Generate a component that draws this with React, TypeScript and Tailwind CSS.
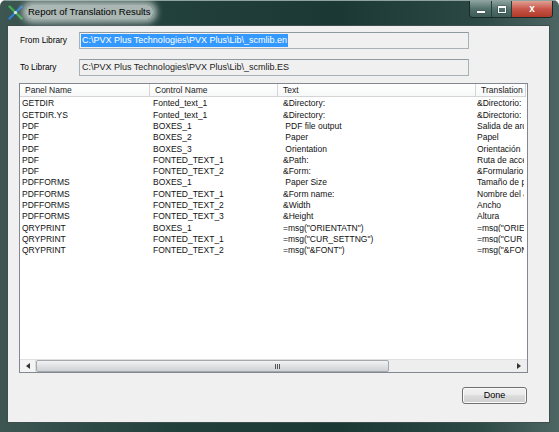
import React from "react";

const rows: [string, string, string, string][] = [
  ["GETDIR", "Fonted_text_1", "&Directory:", "&Directorio:"],
  ["GETDIR.YS", "Fonted_text_1", "&Directory:", "&Directorio:"],
  ["PDF", "BOXES_1", " PDF file output", "Salida de archivo PDF"],
  ["PDF", "BOXES_2", " Paper", "Papel"],
  ["PDF", "BOXES_3", " Orientation", "Orientación"],
  ["PDF", "FONTED_TEXT_1", "&Path:", "Ruta de acceso:"],
  ["PDF", "FONTED_TEXT_2", "&Form:", "&Formulario:"],
  ["PDFFORMS", "BOXES_1", " Paper Size", "Tamaño de papel"],
  ["PDFFORMS", "FONTED_TEXT_1", "&Form name:", "Nombre del &formulario:"],
  ["PDFFORMS", "FONTED_TEXT_2", "&Width", "Ancho"],
  ["PDFFORMS", "FONTED_TEXT_3", "&Height", "Altura"],
  ["QRYPRINT", "BOXES_1", "=msg(\"ORIENTATN\")", "=msg(\"ORIENTATN\")"],
  ["QRYPRINT", "FONTED_TEXT_1", "=msg(\"CUR_SETTNG\")", "=msg(\"CUR_SETTNG\")"],
  ["QRYPRINT", "FONTED_TEXT_2", "=msg(\"&FONT\")", "=msg(\"&FONT\")"],
];

const cols = [
  { name: "Panel Name", w: "w-[130px]" },
  { name: "Control Name", w: "w-[128px]" },
  { name: "Text", w: "w-[198px]" },
  { name: "Translation", w: "w-[50px]" },
];

function AppIcon() {
  return (
    <svg width="15" height="15" viewBox="0 0 15 15">
      <path d="M1.5 1.5 L6.5 6.5" stroke="#3fae4f" strokeWidth="2.4" strokeLinecap="round" />
      <path d="M13.5 1.5 L8.5 6.5" stroke="#2f7fd0" strokeWidth="2.4" strokeLinecap="round" />
      <path d="M1.5 13.5 L6.5 8.5" stroke="#2f7fd0" strokeWidth="2.4" strokeLinecap="round" />
      <path d="M13.5 13.5 L8.5 8.5" stroke="#3fae4f" strokeWidth="2.4" strokeLinecap="round" />
      <circle cx="7.5" cy="7.5" r="1.6" fill="#dfeee0" />
    </svg>
  );
}

function TextBox({ value, selected }: { value: string; selected?: boolean }) {
  return (
    <div className="w-[390px] h-[17px] border border-[#a7b2b8] border-t-[#8e9ba3] bg-[#f0f0f0] flex items-center pl-[1px]">
      <span
        className={
          selected
            ? "bg-[#3399ff] text-white px-[1px] leading-[13px]"
            : "text-[#222] px-[1px] leading-[13px]"
        }
      >
        {value}
      </span>
    </div>
  );
}

export default function App() {
  return (
    <div
      className="w-[559px] h-[432px] flex flex-col bg-[linear-gradient(90deg,#3d5652_0%,#22403c_30%,#1c3834_60%,#2b4844_85%,#4e6663_100%)] rounded-t-[6px] overflow-hidden"
      style={{ fontFamily: '"Liberation Sans", Arial, sans-serif' }}
    >
      {/* Title bar */}
      <div className="h-[25px] flex items-start border-t border-[#8ea39e] relative">
        <div className="flex items-center h-[22px] pl-[8px] gap-[3px]">
          <AppIcon />
          <span className="text-[9.5px] text-black px-[2px] bg-[#c9d2ce]/80 rounded-[6px] shadow-[0_0_6px_4px_rgba(201,210,206,0.8)]">
            Report of Translation Results
          </span>
        </div>
        <div className="ml-auto mr-[6px] flex h-[17px] border border-t-0 border-[#1a2a28] rounded-b-[4px] overflow-hidden">
          <div className="w-[22px] flex items-center justify-center bg-[linear-gradient(#8aa09c,#52706b_50%,#3e5c57)] border-r border-[#2a3c3a]">
            <div className="w-[8px] h-[2px] bg-white mt-[5px] shadow-[0_0_1px_#000]" />
          </div>
          <div className="w-[20px] flex items-center justify-center bg-[linear-gradient(#8aa09c,#52706b_50%,#3e5c57)] border-r border-[#2a3c3a]">
            <div className="w-[8px] h-[7px] border border-white border-t-2 shadow-[0_0_1px_#000]" />
          </div>
          <div className="w-[40px] flex items-center justify-center bg-[linear-gradient(#e0a193,#c75548_50%,#b03a28)]">
            <span className="text-white text-[10px] font-bold leading-none">x</span>
          </div>
        </div>
      </div>

      {/* Client area */}
      <div className="flex-1 ml-[7px] mr-[9px] mb-[9px] bg-[#f0f0f0] border border-[#3d4e4b] flex flex-col pt-[6px] pb-[18px] text-[9px]">
        <div className="flex items-center h-[17px]">
          <span className="w-[71px] pl-[12px] text-[8.3px] text-black">From Library</span>
          <TextBox value={"C:\\PVX Plus Technologies\\PVX Plus\\Lib\\_scmlib.en"} selected />
        </div>
        <div className="flex items-center h-[17px] mt-[10px]">
          <span className="w-[71px] pl-[12px] text-[8.3px] text-black">To Library</span>
          <TextBox value={"C:\\PVX Plus Technologies\\PVX Plus\\Lib\\_scmlib.ES"} />
        </div>

        {/* List view */}
        <div className="ml-[11px] mt-[7px] w-[509px] h-[290px] border border-[#828790] bg-white flex flex-col overflow-hidden text-[8.5px]">
          <div className="flex h-[13px] shrink-0">
            {cols.map((c) => (
              <div
                key={c.name}
                className={`${c.w} shrink-0 h-[13px] flex items-center pl-[5px] border-r border-b border-[#d5d5d5] bg-[linear-gradient(#ffffff,#f7f8f9)] text-[#222] whitespace-nowrap overflow-hidden`}
              >
                {c.name}
              </div>
            ))}
          </div>
          <div className="flex-1 pt-[1px]">
            {rows.map((r, i) => (
              <div key={i} className="flex h-[11.3px] items-center leading-none text-[#111]">
                <div className="w-[130px] shrink-0 pl-[2px] whitespace-pre">{r[0]}</div>
                <div className="w-[128px] shrink-0 pl-[3px] whitespace-pre">{r[1]}</div>
                <div className="w-[198px] shrink-0 pl-[5px] whitespace-pre">{r[2]}</div>
                <div className="w-[48px] shrink-0 pl-[1px] whitespace-pre overflow-hidden">{r[3]}</div>
              </div>
            ))}
          </div>
          {/* Horizontal scrollbar */}
          <div className="h-[13px] shrink-0 flex bg-[#eeeeee] border-t border-[#e0e0e0]">
            <div className="w-[16px] flex items-center justify-center bg-[#f4f4f4] border-r border-[#dcdcdc]">
              <svg width="4" height="6" viewBox="0 0 4 6">
                <path d="M4 0 L0 3 L4 6 Z" fill="#333" />
              </svg>
            </div>
            <div className="w-[353px] flex items-center justify-center border border-[#a4a8ad] rounded-[2px] bg-[linear-gradient(#f2f3f4,#dfe1e3_50%,#cfd2d5)]">
              <div className="flex gap-[1px] pl-[130px]">
                <div className="w-[1px] h-[5px] bg-[#555]" />
                <div className="w-[1px] h-[5px] bg-[#555]" />
                <div className="w-[1px] h-[5px] bg-[#555]" />
              </div>
            </div>
            <div className="flex-1" />
            <div className="w-[16px] flex items-center justify-center">
              <svg width="4" height="6" viewBox="0 0 4 6">
                <path d="M0 0 L4 3 L0 6 Z" fill="#333" />
              </svg>
            </div>
          </div>
        </div>

        <div className="flex-1" />
        <div className="flex justify-end pr-[22px]">
          <button className="w-[65px] h-[17px] rounded-[3px] border border-[#707070] bg-[linear-gradient(#f2f2f2,#ebebeb_45%,#dddddd_50%,#cfcfcf)] text-[9px] text-black shadow-[inset_0_0_0_1px_#fbfbfb]">
            Done
          </button>
        </div>
      </div>
    </div>
  );
}
